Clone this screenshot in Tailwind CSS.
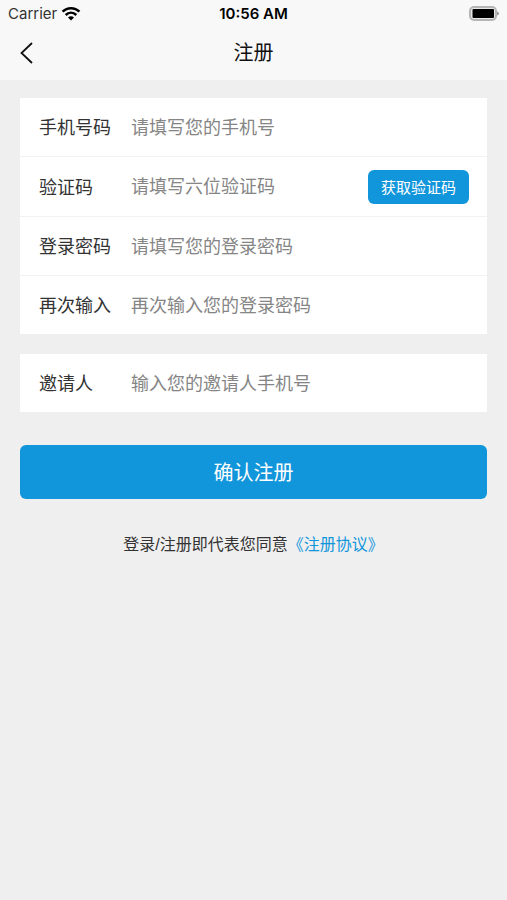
<!DOCTYPE html>
<html lang="zh-CN">
<head>
<meta charset="utf-8">
<meta name="viewport" content="width=device-width, initial-scale=1">
<title>注册</title>
<script src="https://cdn.jsdelivr.net/npm/@tailwindcss/browser@4"></script>
</head>
<body class="min-h-screen bg-[#efefef] font-['Liberation_Sans','Noto_Sans_CJK_SC',sans-serif] text-[#333333]">
<header class="bg-[#f8f8f8]">
  <div class="grid h-7 grid-cols-3 items-center px-2 font-['Inter',sans-serif] text-[15px] text-[#1f1f1f]">
    <div class="flex items-center gap-1">
      <span class="text-[#333333]">Carrier</span>
      <svg class="h-4 w-5" viewBox="0 0 20 16" fill="none" stroke="#000" stroke-width="2.6" aria-hidden="true">
        <path d="M1.600 5.700C6.300 1 13.700 1 18.400 5.700"/>
        <path d="M4.700 9C7.800 6 12.200 6 15.300 9"/>
        <path d="M7 11.500C8.800 9.900 11.200 9.900 13 11.500L10 14.600Z" fill="#000" stroke="none"/>
      </svg>
    </div>
    <span class="text-center font-semibold text-black">10:56 AM</span>
    <svg class="h-4 w-8 justify-self-end" viewBox="0 0 32 16" aria-hidden="true">
      <rect x="3" y="1" width="26" height="13" rx="4" fill="#e8e8e8" stroke="#b5b5b5" stroke-width="2"/>
      <rect x="5.500" y="3" width="21.500" height="9" rx="1" fill="#000"/>
      <path d="M30 5.500q2 .5 2 2t-2 2z" fill="#999"/>
    </svg>
  </div>
  <div class="grid h-[52px] grid-cols-[40px_1fr_40px] items-start px-2">
    <button type="button" aria-label="返回" class="flex h-12 items-center pl-2">
      <svg class="h-6 w-6" viewBox="0 0 24 24" fill="none" stroke="#111" stroke-width="1.800" aria-hidden="true"><path d="M16 3L5.500 13L16 23"/></svg>
    </button>
    <h1 class="pt-px text-center text-xl leading-12 text-[#111111]">注册</h1>
  </div>
</header>
<main class="px-5 pt-[18px]">
  <form>
    <div class="divide-y divide-[#f2f2f2] bg-white text-lg">
      <div class="flex items-center pr-[18px] pl-[19px]">
        <label for="phone" class="w-[92px] shrink-0 pt-0.5">手机号码</label>
        <input id="phone" type="tel" placeholder="请填写您的手机号" class="h-[58px] min-w-0 flex-1 pt-0.5 outline-none placeholder:text-[#858585]">
      </div>
      <div class="flex items-center pr-[18px] pl-[19px]">
        <label for="code" class="w-[92px] shrink-0 pt-0.5">验证码</label>
        <input id="code" type="text" placeholder="请填写六位验证码" class="h-[59px] min-w-0 flex-1 pt-0.5 outline-none placeholder:text-[#858585]">
        <button type="button" class="h-[34px] w-[101px] shrink-0 rounded-md bg-[#1296db] pt-0.5 text-[15px] text-white">获取验证码</button>
      </div>
      <div class="flex items-center pr-[18px] pl-[19px]">
        <label for="password" class="w-[92px] shrink-0 pt-0.5">登录密码</label>
        <input id="password" type="password" placeholder="请填写您的登录密码" class="h-[58px] min-w-0 flex-1 pt-0.5 outline-none placeholder:text-[#858585]">
      </div>
      <div class="flex items-center pr-[18px] pl-[19px]">
        <label for="confirm" class="w-[92px] shrink-0 pt-0.5">再次输入</label>
        <input id="confirm" type="password" placeholder="再次输入您的登录密码" class="h-[58px] min-w-0 flex-1 pt-0.5 outline-none placeholder:text-[#858585]">
      </div>
    </div>
    <div class="mt-5 flex items-center bg-white pr-[18px] pl-[19px] text-lg">
      <label for="inviter" class="w-[92px] shrink-0 pt-0.5">邀请人</label>
      <input id="inviter" type="tel" placeholder="输入您的邀请人手机号" class="h-[58px] min-w-0 flex-1 pt-0.5 outline-none placeholder:text-[#858585]">
    </div>
    <button type="submit" class="mt-[33px] h-[54px] w-full rounded-md bg-[#1296db] pt-0.5 text-xl text-white">确认注册</button>
  </form>
  <p class="mt-[34px] text-center text-base">登录/注册即代表您同意<a href="#" class="text-[#1296db]">《注册协议》</a></p>
</main>
</body>
</html>
